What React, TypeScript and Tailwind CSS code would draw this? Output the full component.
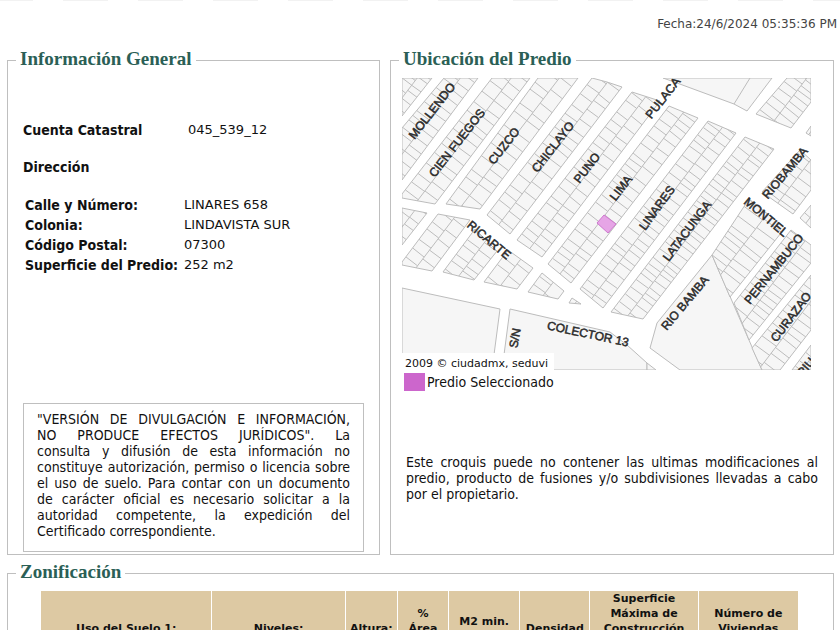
import type { ReactNode } from "react";

type Pt = [number, number];

/* Street axis of the neighbourhood: A runs along the streets, B across them. */
const A: Pt = [0.607, -0.795];
const B: Pt = [0.795, 0.607];

interface Block {
  pts: Pt[];
  pitch?: number;
}

const blocks: Block[] = [
  { pts: [[402, 78], [432, 78], [402, 116]], pitch: 8 },
  { pts: [[444, 78], [478, 78], [402, 180], [402, 128]], pitch: 9 },
  { pts: [[492, 78], [530, 78], [435, 204], [402, 198], [402, 194]], pitch: 10 },
  { pts: [[538, 78], [578, 78], [480, 209], [446, 204]], pitch: 13 },
  { pts: [[592, 78], [607, 82], [622, 87], [510, 234], [487, 215]], pitch: 11 },
  { pts: [[632, 92], [660, 101], [542, 257], [517, 240]], pitch: 11 },
  { pts: [[669, 106], [698, 118], [571, 283], [548, 264]], pitch: 10 },
  { pts: [[708, 121], [736, 133], [603, 308], [580, 289]], pitch: 9 },
  { pts: [[745, 137], [774, 149], [643, 319], [611, 312]], pitch: 8 },
  { pts: [[787, 78], [811, 78], [811, 102], [791, 128], [756, 114]], pitch: 8 },
  { pts: [[811, 126], [806, 133], [811, 136]], pitch: 20 },
  { pts: [[800, 150], [811, 160], [811, 190], [793, 214], [762, 192]], pitch: 9 },
  { pts: [[811, 205], [800, 218], [811, 228]], pitch: 14 },
  { pts: [[749, 199], [785, 228], [730, 297], [712, 255]], pitch: 9 },
  { pts: [[791, 230], [811, 245], [811, 263], [749, 340], [734, 303]], pitch: 9 },
  { pts: [[811, 275], [811, 330], [780, 370], [762, 370], [752, 348]], pitch: 9 },
  { pts: [[811, 345], [811, 370], [792, 370]], pitch: 9 },
  { pts: [[402, 208], [427, 213], [402, 245]], pitch: 10 },
  { pts: [[438, 214], [470, 220], [432, 271], [402, 265], [402, 262]], pitch: 11 },
  { pts: [[475, 229], [497, 251], [474, 280], [443, 272]], pitch: 9 },
  { pts: [[508, 250], [533, 268], [517, 289], [484, 282]], pitch: 12 },
  { pts: [[542, 273], [564, 291], [558, 299], [528, 292]], pitch: 14 },
  { pts: [[572, 298], [581, 304], [569, 303]], pitch: 30 },
];

const plains: Pt[][] = [
  [[663, 78], [677, 83], [734, 104], [747, 111], [772, 78]],
  [[712, 255], [657, 323], [650, 348], [680, 370], [762, 370]],
  [[402, 288], [500, 309], [492, 370], [402, 370]],
  [[510, 309], [610, 332], [627, 345], [647, 363], [647, 370], [502, 370]],
  [[647, 363], [656, 370], [647, 370]],
];

const streets: { t: string; x: number; y: number; r: number }[] = [
  { t: "MOLLENDO", x: 432, y: 111, r: -52 },
  { t: "CIEN FUEGOS", x: 457, y: 143, r: -52 },
  { t: "CUZCO", x: 504, y: 146, r: -52 },
  { t: "CHICLAYO", x: 553, y: 147, r: -52 },
  { t: "PUNO", x: 587, y: 168, r: -52 },
  { t: "LIMA", x: 621, y: 188, r: -52 },
  { t: "PULACA", x: 663, y: 98, r: -52 },
  { t: "LINARES", x: 657, y: 208, r: -54 },
  { t: "LATACUNGA", x: 687, y: 231, r: -53 },
  { t: "RIOBAMBA", x: 785, y: 173, r: -50 },
  { t: "MONTIEL", x: 766, y: 217, r: 40 },
  { t: "PERNAMBUCO", x: 774, y: 269, r: -51 },
  { t: "CURAZAO", x: 791, y: 317, r: -53 },
  { t: "RIO BAMBA", x: 685, y: 303, r: -50 },
  { t: "RICARTE", x: 489, y: 240, r: 40 },
  { t: "COLECTOR 13", x: 588, y: 334, r: 12 },
  { t: "S/N", x: 515, y: 338, r: -80 },
  { t: "PIU", x: 806, y: 367, r: -50 },
];

const path = (pts: Pt[]) => "M" + pts.map((p) => p.join(" ")).join("L") + "Z";

/* Lot limits: a spine along the block and staggered cross lines on each side. */
function lots(block: Block, index: number) {
  const us = block.pts.map(([x, y]) => x * A[0] + y * A[1]);
  const vs = block.pts.map(([x, y]) => x * B[0] + y * B[1]);
  const u0 = Math.min(...us);
  const u1 = Math.max(...us);
  const v0 = Math.min(...vs);
  const v1 = Math.max(...vs);
  const mid = (v0 + v1) / 2;
  const at = (u: number, v: number) =>
    `${(u * A[0] + v * B[0]).toFixed(1)} ${(u * A[1] + v * B[1]).toFixed(1)}`;
  const pitch = block.pitch ?? 10;
  let d = `M${at(u0, mid)}L${at(u1, mid)}`;
  let seed = index * 17 + 5;
  const next = () => {
    seed = (seed * 73 + 41) % 997;
    return seed / 997;
  };
  for (const [a, b] of [[v0, mid], [mid, v1]]) {
    let u = u0 + pitch * (0.4 + next() * 0.5);
    while (u < u1) {
      d += `M${at(u, a)}L${at(u + next() - 0.5, b)}`;
      u += pitch * (0.65 + next() * 0.7);
    }
  }
  return d;
}

function StreetMap() {
  return (
    <svg
      viewBox="402 78 409 292"
      className="block w-[409px] max-w-full"
      role="img"
      aria-label="Croquis de ubicación"
    >
      <defs>
        {blocks.map((b, i) => (
          <clipPath id={`block-${i}`} key={i}>
            <path d={path(b.pts)} />
          </clipPath>
        ))}
      </defs>
      <g fill="#f6f6f6" stroke="#bcbcbc" strokeWidth="1">
        {plains.map((p, i) => (
          <path d={path(p)} key={i} />
        ))}
        <path d="M734 104L750 78" />
        {blocks.map((b, i) => (
          <g key={i}>
            <path d={path(b.pts)} />
            <path d={lots(b, i)} clipPath={`url(#block-${i})`} fill="none" />
          </g>
        ))}
      </g>
      <path d="M604 215L616 224L608 233L597 223Z" fill="#e6a5e6" stroke="#cf78cf" />
      <g
        fill="#2b2b2b"
        fontFamily="'Liberation Sans', Arial, sans-serif"
        fontSize="12"
        textAnchor="middle"
        stroke="#2b2b2b"
        strokeWidth="0.5"
      >
        {streets.map((s) => (
          <text key={s.t} transform={`translate(${s.x} ${s.y}) rotate(${s.r})`} y="4">
            {s.t}
          </text>
        ))}
      </g>
      <rect x="402" y="353" width="152" height="17" fill="#ffffff" />
      <text x="405" y="367" fontSize="11" fill="#111111" fontFamily="'DejaVu Sans', Verdana, sans-serif">
        2009 © ciudadmx, seduvi
      </text>
    </svg>
  );
}

function Panel({ title, className, children }: { title: string; className: string; children: ReactNode }) {
  return (
    <fieldset className={`min-w-0 border border-[#bfbfbf] ${className}`}>
      <legend className="ml-2 px-1 pb-0.5 font-['Liberation_Serif','Times_New_Roman',serif] text-[19px] leading-[22px] font-bold text-[#2b5f56]">
        {title}
      </legend>
      {children}
    </fieldset>
  );
}

const address = [
  ["Calle y Número:", "LINARES 658"],
  ["Colonia:", "LINDAVISTA SUR"],
  ["Código Postal:", "07300"],
  ["Superficie del Predio:", "252 m2"],
];

const disclaimer = [
  '"VERSIÓN DE DIVULGACIÓN E INFORMACIÓN,',
  'NO PRODUCE EFECTOS JURÍDICOS". La',
  "consulta y difusión de esta información no",
  "constituye autorización, permiso o licencia sobre",
  "el uso de suelo. Para contar con un documento",
  "de carácter oficial es necesario solicitar a la",
  "autoridad competente, la expedición del",
];

const columns: { lines: string[]; width: string }[] = [
  { lines: ["Uso del Suelo 1:"], width: "w-[170px]" },
  { lines: ["Niveles:"], width: "w-[132px]" },
  { lines: ["Altura:"], width: "w-[51px]" },
  { lines: ["%", "Área", "Libre"], width: "w-[50px]" },
  { lines: ["M2 min.", "Vivienda:"], width: "w-[70px]" },
  { lines: ["Densidad"], width: "w-[69px]" },
  { lines: ["Superficie", "Máxima de", "Construcción", "(Sujeta a", "restricciones*)"], width: "w-[107px]" },
  { lines: ["Número de", "Viviendas", "Permitidas"], width: "w-[99px]" },
];

export default function App() {
  return (
    <div className="h-screen overflow-hidden bg-white font-['DejaVu_Sans_Condensed',Tahoma,'DejaVu_Sans',sans-serif] text-sm leading-4 text-[#111]">
      <div className="h-px bg-[repeating-linear-gradient(90deg,#f2f2f2_0_33px,transparent_33px_63px,#f2f2f2_63px_75px)]" />
      <p className="mt-4 pr-[3px] text-right font-['DejaVu_Sans',Verdana,sans-serif] text-xs leading-[15px] text-[#444]">
        Fecha:24/6/2024 05:35:36 PM
      </p>
      <main className="mt-4 pr-1.5 pl-[7px]">
        <div className="grid grid-cols-[373fr_444fr] gap-2.5">
          <Panel title="Información General" className="pb-0.5">
            <div className="pr-[15px] pl-[15px]">
              <dl className="flex pt-[50px]">
                <dt className="w-[165px] font-bold">Cuenta Catastral</dt>
                <dd className="font-['DejaVu_Sans',sans-serif] text-[13px]">045_539_12</dd>
              </dl>
              <h3 className="mt-[21px] font-bold">Dirección</h3>
              <table className="mt-5 ml-0.5">
                <tbody>
                  {address.map(([label, value]) => (
                    <tr key={label} className="h-5">
                      <th scope="row" className="w-[159px] text-left font-bold whitespace-nowrap">
                        {label}
                      </th>
                      <td className="font-['DejaVu_Sans',sans-serif] text-[13px]">{value}</td>
                    </tr>
                  ))}
                </tbody>
              </table>
              <p className="mt-32 border border-[#bfbfbf] px-[13px] pt-[7px] pb-3">
                {disclaimer.map((line) => (
                  <span key={line} className="block text-justify [text-align-last:justify]">
                    {line}
                  </span>
                ))}
                Certificado correspondiente.
              </p>
            </div>
          </Panel>
          <Panel title="Ubicación del Predio" className="">
            <div className="pt-1.5 pr-[15px] pl-[11px]">
              <StreetMap />
              <div className="mt-0.5 flex h-[19px] items-center gap-0.5 pl-0.5">
                <span className="h-[18px] w-[21px] bg-[#cc66cc]" />
                <span>Predio Seleccionado</span>
              </div>
              <p className="mt-[63px] pl-1 text-justify">
                Este croquis puede no contener las ultimas modificaciones al predio, producto de
                fusiones y/o subdivisiones llevadas a cabo por el propietario.
              </p>
            </div>
          </Panel>
        </div>
        <Panel title="Zonificación" className="mt-1.5">
          <div className="pt-[6px] pr-[34px] pb-4 pl-[32px]">
            <table className="w-full table-fixed border-separate border-spacing-x-px border-spacing-y-0 font-['DejaVu_Sans',Verdana,sans-serif] text-[11px] leading-[15px]">
              <thead>
                <tr>
                  {columns.map((c) => (
                    <th key={c.lines[0]} scope="col" className={`bg-[#ddc9a3] p-0 font-bold ${c.width}`}>
                      {c.lines.map((line) => (
                        <span key={line} className="block">
                          {line}
                        </span>
                      ))}
                    </th>
                  ))}
                </tr>
              </thead>
            </table>
          </div>
        </Panel>
      </main>
    </div>
  );
}
